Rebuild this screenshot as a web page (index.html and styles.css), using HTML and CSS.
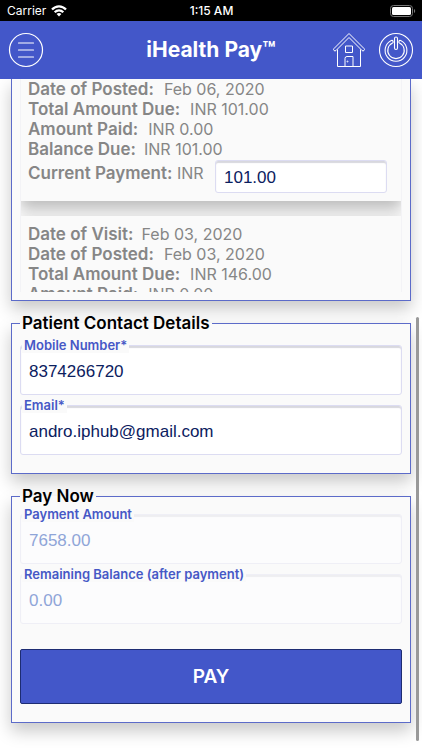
FILE: index.html
```html
<!DOCTYPE html>
<html lang="en">
<head>
<meta charset="utf-8">
<meta name="viewport" content="width=device-width, initial-scale=1">
<title>iHealth Pay</title>
<link rel="stylesheet" href="styles.css">
</head>
<body>
<div class="status">
  <div class="carrier">Carrier
    <svg width="16" height="12" viewBox="0 0 16 12" fill="none" stroke="#fff" stroke-width="2.2"><path d="M1 4.600C5 .2 11 .2 15 4.600M3.700 7.300C6.200 4.600 9.800 4.600 12.300 7.300"/><path d="M8 11.500 5.600 9C7 7.700 9 7.700 10.400 9Z" fill="#fff" stroke="none"/></svg>
  </div>
  <div class="clock">1:15 AM</div>
  <svg class="battery" width="26" height="12" viewBox="0 0 26 12"><rect x=".5" y=".5" width="22" height="11" rx="3" fill="none" stroke="#777"/><rect x="2" y="2" width="19" height="8" rx="1.500" fill="#fff"/><path d="M24 4c1.600.6 1.600 3.400 0 4Z" fill="#777"/></svg>
</div>
<header class="header">
  <button class="icon-button" type="button" aria-label="Menu">
    <svg width="36" height="36" viewBox="0 0 36 36" fill="none" stroke="#fff" stroke-width="1.200"><circle cx="18" cy="18" r="16.500"/><path d="M10.500 11h15M10.500 18h15M10.500 25h15" stroke-linecap="round"/></svg>
  </button>
  <h1>iHealth Pay™</h1>
  <div class="actions">
    <button class="icon-button" type="button" aria-label="Home">
      <svg width="36" height="36" viewBox="0 0 36 36" fill="none" stroke="#fff" stroke-width="1" stroke-linejoin="round"><path d="M18 1.500 3 16.500a1.300 1.300 0 0 0 2 2L18 5.500l13 13a1.300 1.300 0 0 0 2-2ZM6.500 17.500V34.500h23V17.500M14.500 14h7v6.500h-7ZM14 34.500V26.500a2 2 0 0 1 2-2h6v10"/><circle cx="16.500" cy="29.500" r=".5"/></svg>
    </button>
    <button class="icon-button" type="button" aria-label="Log out">
      <svg width="36" height="36" viewBox="0 0 36 36" fill="none" stroke="#fff" stroke-width="1.100"><circle cx="18" cy="18" r="16.500"/><path d="M13.300 8.500A10.900 10.900 0 1 0 22.700 8.500C21 7.800 20.100 10.200 21.500 11A8.200 8.200 0 1 1 14.500 11C15.900 10.200 15 7.800 13.300 8.500Z"/><rect x="16.500" y="5" width="3" height="12.500" rx="1.500"/></svg>
    </button>
  </div>
</header>
<main>
  <section class="panel dues">
    <div class="list">
      <article class="visit">
        <p><b>Date of Posted:</b><span class="wide">Feb 06, 2020</span></p>
        <p><b>Total Amount Due:</b><span class="wide">INR 101.00</span></p>
        <p><b>Amount Paid:</b><span class="wide">INR 0.00</span></p>
        <p><b>Balance Due:</b><span>INR 101.00</span></p>
        <div class="payment">
          <label for="current"><b>Current Payment:</b> INR</label>
          <input id="current" type="text" value="101.00">
        </div>
      </article>
      <article class="visit next">
        <p><b>Date of Visit:</b><span>Feb 03, 2020</span></p>
        <p><b>Date of Posted:</b><span class="wide">Feb 03, 2020</span></p>
        <p><b>Total Amount Due:</b><span class="wide">INR 146.00</span></p>
        <p><b>Amount Paid:</b><span class="wide">INR 0.00</span></p>
      </article>
    </div>
  </section>
  <fieldset class="panel">
    <legend>Patient Contact Details</legend>
    <div class="fields contact">
      <div class="field"><label for="mobile">Mobile Number*</label><input id="mobile" type="tel" value="8374266720"></div>
      <div class="field"><label for="email">Email*</label><input id="email" type="email" value="andro.iphub@gmail.com"></div>
    </div>
  </fieldset>
  <fieldset class="panel">
    <legend>Pay Now</legend>
    <div class="fields">
      <div class="field"><label for="amount">Payment Amount</label><input id="amount" type="text" value="7658.00" disabled></div>
      <div class="field"><label for="balance">Remaining Balance (after payment)</label><input id="balance" type="text" value="0.00" disabled></div>
    </div>
    <button class="submit" type="button">PAY</button>
  </fieldset>
  <div class="scrollbar"></div>
</main>
</body>
</html>
```
FILE: styles.css
```css
* { box-sizing: border-box; }
body {
  margin: 0;
  min-height: 100vh;
  background: #fff;
  color: #868686;
  font: 16px/20px Inter, "Liberation Sans", sans-serif;
}
.status {
  display: grid;
  grid-template-columns: 1fr auto 1fr;
  align-items: center;
  height: 21px;
  padding: 0 6px 0 7px;
  background: #000;
  color: #fff;
  font-size: 12px;
}
.carrier { display: flex; align-items: center; gap: 5px; }
.clock { font-weight: 500; }
.battery { justify-self: end; }
.header {
  display: grid;
  grid-template-columns: 1fr auto 1fr;
  align-items: center;
  height: 58px;
  padding: 0 8px;
  background: #4357c9;
  color: #fff;
}
.header h1 { margin: 0; font-size: 21px; line-height: 24px; font-weight: 700; }
.actions { display: flex; justify-content: flex-end; gap: 11px; }
.icon-button {
  width: 36px;
  height: 36px;
  padding: 0;
  border: 0;
  background: none;
}
.icon-button svg { display: block; }
main { position: relative; overflow: hidden; padding: 0 11px 28px; }
.panel {
  min-width: 0;
  margin: 0;
  border: 1px solid #5c6bc9;
  background: #fafafa;
  box-shadow: 0 8px 16px rgba(0, 0, 0, .22);
}
.dues { border-top: 0; padding: 0 8px 8px; }
.list {
  height: 213px;
  overflow: hidden;
  border: solid #f3f3f6;
  border-width: 0 1px;
  background: #fafafa;
}
.visit { padding: 0 14px 8px 7px; box-shadow: 0 8px 14px rgba(0, 0, 0, .25); }
.visit p { margin: 0; white-space: nowrap; }
.visit b { font-size: 17px; font-weight: 600; }
.visit span { margin-left: 8px; }
.visit .wide { margin-left: 10px; }
.payment { display: flex; justify-content: space-between; margin-top: 1px; }
.payment label { padding-top: 3px; }
.payment input { width: 172px; height: 33px; }
.next { margin-top: 15px; padding-top: 8px; position: relative; background: #fafafa; }
input {
  width: 100%;
  height: 50px;
  padding: 2px 8px 0;
  border: 1px solid #dcdcf2;
  border-radius: 3px;
  background: #fff;
  box-shadow: inset 0 2px 1px #d8d8de;
  color: #0b2060;
  font: 17px "Liberation Sans", sans-serif;
}
fieldset.panel { margin-top: 12px; padding: 0 8px 18px; }
legend { padding: 0 2px; color: #000; font-size: 17px; font-weight: 600; line-height: 20px; }
.fields { display: grid; gap: 2px; }
.contact { padding-top: 4px; }
.field { display: flex; flex-direction: column; align-items: flex-start; }
.field label {
  position: relative;
  margin: 0 0 -8px 2px;
  padding: 0 2px;
  background: #fafafa;
  color: #4658c6;
  font-size: 13px;
  line-height: 16px;
  font-weight: 600;
}
.field input { padding-top: 4px; }
input:disabled {
  border-color: #efeff6;
  background: #fcfcfd;
  box-shadow: inset 0 2px 1px #eeeef1;
  color: #8fa5d8;
}
.submit {
  display: block;
  width: 100%;
  height: 55px;
  margin-top: 25px;
  border: 1px solid #1d2c72;
  border-radius: 2px;
  background: #4357c9;
  color: #fff;
  font: 600 19px Inter, sans-serif;
}
.scrollbar {
  position: absolute;
  top: 238px;
  right: 3px;
  bottom: 10px;
  width: 3px;
  border-radius: 2px;
  background: #999;
}
```
